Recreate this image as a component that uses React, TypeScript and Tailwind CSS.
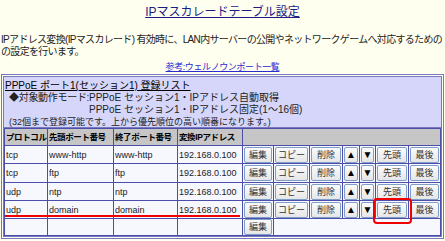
import React from 'react'

type Row = {proto: string; start: string; end: string; ip: string; h: string}

const rows: Row[] = [
    {proto: 'tcp', start: 'www-http', end: 'www-http', ip: '192.168.0.100', h: 'h-[18px]'},
    {proto: 'tcp', start: 'ftp', end: 'ftp', ip: '192.168.0.100', h: 'h-[19px]'},
    {proto: 'udp', start: 'ntp', end: 'ntp', ip: '192.168.0.100', h: 'h-[18px]'},
    {proto: 'udp', start: 'domain', end: 'domain', ip: '192.168.0.100', h: 'h-[18px]'},
]

const font = {fontFamily: '"Liberation Sans", "Noto Sans CJK JP", sans-serif'}

const Btn: React.FC<{label: string; arrow?: boolean}> = ({label, arrow}) => (
    <button
        type="button"
        className={
            'block w-full h-[16px] rounded-[2px] border border-[#7f9dc9] bg-gradient-to-b from-[#fbfbfb] to-[#e6e6e6] leading-[14px] ' +
            (arrow ? 'text-[10px] text-black' : 'text-[9px] text-[#333]')
        }
    >
        {label}
    </button>
)

const td = 'border border-[#4d4dab] px-[1px] py-0 text-[9px] leading-[12px] text-[#222] whitespace-nowrap'
const th = 'border border-[#4d4dab] px-[1px] py-0 text-[8.5px] leading-[12px] text-left font-bold text-black whitespace-nowrap tracking-[-0.4px]'
const btnTd = 'border border-[#4d4dab] px-[1px] py-0 text-[9px] leading-[12px]'

export default function App() {
    return (
        <div className="w-[445px] h-[241px] overflow-hidden bg-[#fffff0] text-[10px] leading-[12px]" style={font}>
            <div className="pt-[4px] text-center text-[12px] leading-[16px]">
                <a className="text-[#1c1c86] underline">IPマスカレードテーブル設定</a>
            </div>

            <div className="mt-[14px] pl-[1px] text-[10px] leading-[12px] text-[#222] whitespace-nowrap tracking-[-0.68px]">
                <div>IPアドレス変換(IPマスカレード) 有効時に、LAN内サーバーの公開やネットワークゲームへ対応するための</div>
                <div>の設定を行います。</div>
            </div>

            <div className="mt-[4px] text-center text-[9px] leading-[11px] tracking-[-0.4px]">
                <a className="text-[#2b2bd0] underline">参考:ウェルノウンポート一覧</a>
            </div>

            <div className="relative mx-[1px] mt-[1px] border-[3px] border-double border-[#7878c0]">
                {/* 登録リスト ヘッダ */}
                <div className="h-[51px] bg-[#d6d6fb] border-b border-[#7878c0] pl-[1px] pt-[3px] text-[#222] whitespace-nowrap">
                    <div className="text-[10px] leading-[12px] underline text-black">PPPoE ポート1(セッション1) 登録リスト</div>
                    <div className="flex pl-[4px] text-[10px] leading-[12px]">
                        <span className="w-[80px] shrink-0 tracking-[-0.3px]">◆対象動作モード:</span>
                        <div>
                            <div>PPPoE セッション1・IPアドレス自動取得</div>
                            <div>PPPoE セッション1・IPアドレス固定(1〜16個)</div>
                        </div>
                    </div>
                    <div className="pl-[4px] text-[9px] leading-[12px]">(32個まで登録可能です。上から優先順位の高い順番になります。)</div>
                </div>

                <table className="w-[436px] table-fixed border-collapse bg-[#f7f7fe]">
                    <colgroup>
                        <col className="w-[43px]" />
                        <col className="w-[66px]" />
                        <col className="w-[64px]" />
                        <col className="w-[65px]" />
                        <col className="w-[31px]" />
                        <col className="w-[36px]" />
                        <col className="w-[33px]" />
                        <col className="w-[17px]" />
                        <col className="w-[16px]" />
                        <col className="w-[33px]" />
                        <col className="w-[32px]" />
                    </colgroup>
                    <thead>
                        <tr className="h-[17px] bg-[#c6c6c6]">
                            <th className={th}>プロトコル</th>
                            <th className={th}>先頭ポート番号</th>
                            <th className={th}>終了ポート番号</th>
                            <th className={th}>変換IPアドレス</th>
                            <th className={th} colSpan={7} />
                        </tr>
                    </thead>
                    <tbody>
                        {rows.map((r, i) => (
                            <tr key={i} className={r.h}>
                                <td className={td}>{r.proto}</td>
                                <td className={td}>{r.start}</td>
                                <td className={td}>{r.end}</td>
                                <td className={td}>{r.ip}</td>
                                <td className={btnTd}><Btn label="編集" /></td>
                                <td className={btnTd}><Btn label="コピー" /></td>
                                <td className={btnTd}><Btn label="削除" /></td>
                                <td className={btnTd}><Btn label="▲" arrow /></td>
                                <td className={btnTd}><Btn label="▼" arrow /></td>
                                <td className={btnTd}><Btn label="先頭" /></td>
                                <td className={btnTd}><Btn label="最後" /></td>
                            </tr>
                        ))}
                        <tr className="h-[17px]">
                            <td className={td} />
                            <td className={td} />
                            <td className={td} />
                            <td className={td} />
                            <td className={btnTd}><Btn label="編集" /></td>
                            <td className={td} colSpan={6} />
                        </tr>
                    </tbody>
                </table>

                {/* 注目箇所のマーク */}
                <div className="absolute left-[1px] top-[138px] w-[235px] h-[2px] bg-[#f00000]" />
                <div className="absolute left-[369px] top-[121px] w-[39px] h-[26px] rounded-[4px] border-2 border-[#f00000]" />
            </div>
        </div>
    )
}
